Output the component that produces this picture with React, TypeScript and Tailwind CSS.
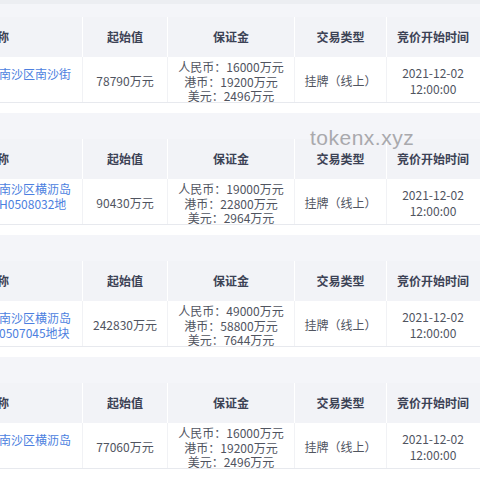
import React from "react";

interface Lot {
  name: string[];
  start: string;
  rmb: string;
  hkd: string;
  usd: string;
}

const lots: Lot[] = [
  { name: ["南沙区南沙街", ""], start: "78790万元", rmb: "16000", hkd: "19200", usd: "2496" },
  { name: ["南沙区横沥岛", "H0508032地", ""], start: "90430万元", rmb: "19000", hkd: "22800", usd: "2964" },
  { name: ["南沙区横沥岛", "0507045地块"], start: "242830万元", rmb: "49000", hkd: "58800", usd: "7644" },
  { name: ["南沙区横沥岛", ""], start: "77060万元", rmb: "16000", hkd: "19200", usd: "2496" },
];

const cols = ["w-[83px]", "w-[85px]", "w-[127px]", "w-[92px]", "w-[92px]"];

const LotTable = ({ lot, first }: { lot: Lot; first: boolean }) => (
  <div className="flex flex-col">
    {first ? (
      <>
        <div className="h-[4px] bg-[#eceef2]" />
        <div className="h-[13px] bg-[#f4f5f9]" />
      </>
    ) : (
      <div className="h-[26px] bg-[#f4f5f9]" />
    )}
    <div className="flex h-[40px] bg-[#f2f3f7] text-[12px] font-bold text-[#3c4255]">
      <div className={`${cols[0]} flex items-center overflow-hidden border-r border-white`}>
        <span className="ml-[-15px] whitespace-nowrap">名称</span>
      </div>
      <div className={`${cols[1]} flex items-center justify-center border-r border-white`}>起始值</div>
      <div className={`${cols[2]} flex items-center justify-center border-r border-white`}>保证金</div>
      <div className={`${cols[3]} flex items-center justify-center border-r border-white`}>交易类型</div>
      <div className={`${cols[4]} flex items-center justify-center`}>竞价开始时间</div>
    </div>
    <div className="flex h-[46px] border-b border-[#e7e9ee] bg-white text-[12px] text-[#50545f]">
      <div className={`${cols[0]} flex flex-col justify-center overflow-hidden border-r border-[#f1f2f5] pt-[2px] leading-[15px] text-[#4c7fe0]`}>
        {lot.name.map((line, i) => (
          <div key={i} className="ml-[-1px] h-[15px] whitespace-nowrap">
            {line}
          </div>
        ))}
      </div>
      <div className={`${cols[1]} flex items-center justify-center border-r border-[#f1f2f5] pt-[3px]`}>{lot.start}</div>
      <div className={`${cols[2]} flex flex-col items-center overflow-hidden border-r border-[#f1f2f5] pt-[3px] leading-[14.5px]`}>
        <div className="whitespace-nowrap">人民币：{lot.rmb}万元</div>
        <div className="whitespace-nowrap">港币：{lot.hkd}万元</div>
        <div className="whitespace-nowrap">美元：{lot.usd}万元</div>
      </div>
      <div className={`${cols[3]} flex items-center justify-center border-r border-[#f1f2f5] pt-[3px]`}>挂牌（线上）</div>
      <div className={`${cols[4]} flex flex-col items-center justify-center pt-[2px] leading-[16px]`}>
        <div>2021-12-02</div>
        <div>12:00:00</div>
      </div>
    </div>
    <div className="h-[10px] bg-white" />
  </div>
);

export default function App() {
  return (
    <div
      className="relative h-[480px] w-[480px] overflow-hidden bg-white"
      style={{ fontFamily: '"Noto Sans CJK SC", "Noto Sans", sans-serif' }}
    >
      <div className="flex flex-col">
        {lots.map((lot, i) => (
          <LotTable key={i} lot={lot} first={i === 0} />
        ))}
      </div>
      <div
        className="absolute left-[310px] top-[122px] text-[21px] tracking-[0.5px] text-[#a9a9ad]"
        style={{ fontFamily: '"Liberation Sans", Arial, sans-serif' }}
      >
        tokenx.xyz
      </div>
    </div>
  );
}
